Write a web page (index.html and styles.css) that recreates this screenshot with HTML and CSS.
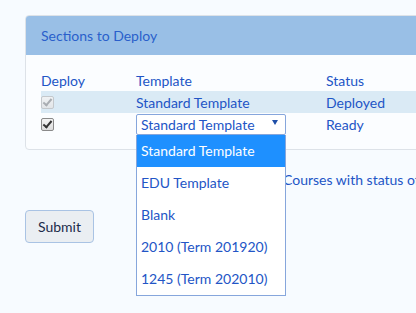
FILE: index.html
```html
<!DOCTYPE html>
<html lang="en">

<head>
    <meta charset="UTF-8">
    <title>Deploy Sections</title>
    <link rel="stylesheet" href="styles.css">
</head>

<body>
    <!-- Panel with sections -->
    <div class="panel">
        <div class="panel-heading">Sections to Deploy</div>
        <div class="panel-body">
            <table class="sections">
                <tr>
                    <th class="col-deploy">Deploy</th>
                    <th class="col-template">Template</th>
                    <th>Status</th>
                </tr>
                <tr class="deployed">
                    <td><input type="checkbox" checked disabled></td>
                    <td>Standard Template</td>
                    <td>Deployed</td>
                </tr>
                <tr>
                    <td><input type="checkbox" checked></td>
                    <td>
                        <div class="template-select">
                            <div class="select-box">
                                <span>Standard Template</span>
                                <span class="arrow"></span>
                            </div>
                            <ul class="options">
                                <li class="selected">Standard Template</li>
                                <li>EDU Template</li>
                                <li>Blank</li>
                                <li>2010 (Term 201920)</li>
                                <li>1245 (Term 202010)</li>
                            </ul>
                        </div>
                    </td>
                    <td>Ready</td>
                </tr>
            </table>
        </div>
    </div>

    <p class="note">Courses with status of Ready will be deployed.</p>

    <button class="submit">Submit</button>
</body>

</html>
```

FILE: styles.css
```css
/* General */
html {
    height: 100%;
    overflow: hidden;
}

body {
    font-family: 'Lato', sans-serif;
    font-size: 14px;
    box-sizing: border-box;
    height: 100%;
    margin: 0;
    padding: 15px 0 0 25px;
    background-color: #f7fbff;
    color: #2255c6;
}

/* Panel */
.panel {
    width: 480px;
    border: 1px solid #dde2e8;
    border-radius: 4px;
    background-color: #fbfdff;
}

.panel-heading {
    background-color: #99bfe6;
    color: #2a5fcb;
    height: 39px;
    line-height: 39px;
    padding: 0 15px;
    border-radius: 3px 3px 0 0;
}

.panel-body {
    padding: 15px 15px 14px;
}

/* Table */
.sections {
    width: 100%;
    border-collapse: collapse;
}

.sections th,
.sections td {
    padding: 0;
    height: 22px;
    text-align: left;
    font-weight: normal;
    vertical-align: middle;
}

.sections th {
    height: 21px;
}

.col-deploy {
    width: 95px;
}

.col-template {
    width: 190px;
}

.sections tr.deployed {
    background-color: #daeaf5;
}

/* Checkboxes */
.sections input {
    appearance: none;
    display: block;
    position: relative;
    box-sizing: border-box;
    width: 13px;
    height: 13px;
    margin: 0;
    border: 1px solid #8a8a8a;
    border-radius: 2px;
    background: linear-gradient(#f4f4f4, #dcdcdc);
}

.sections input:checked::after {
    content: "";
    position: absolute;
    left: 3px;
    top: 0;
    width: 3px;
    height: 7px;
    border: solid #333;
    border-width: 0 2px 2px 0;
    transform: rotate(40deg);
}

.sections input:disabled {
    border-color: #c4c8cc;
    background: linear-gradient(#f0f2f4, #e2e5e8);
}

.sections input:disabled::after {
    border-color: #a9adb2;
}

/* Template select */
.template-select {
    position: relative;
    width: 150px;
}

.select-box {
    display: flex;
    justify-content: space-between;
    align-items: center;
    box-sizing: border-box;
    height: 21px;
    padding: 0 7px 0 4px;
    border: 1px solid #86a6dc;
    border-radius: 2px;
    background-color: #fff;
}

.arrow {
    width: 0;
    height: 0;
    border-left: 3px solid transparent;
    border-right: 3px solid transparent;
    border-top: 5px solid #1f4fa8;
    margin-bottom: 3px;
}

.options {
    position: absolute;
    top: 21px;
    left: 0;
    z-index: 10;
    box-sizing: border-box;
    width: 150px;
    margin: 0;
    padding: 0;
    list-style: none;
    border: 1px solid #86a6dc;
    border-top: none;
    background-color: #fff;
}

.options li {
    height: 32px;
    line-height: 32px;
    padding-left: 4px;
}

.options li.selected {
    background-color: #1e90ff;
    color: #fff;
}

/* Note */
.note {
    margin: 20px 0 0 0;
    padding-left: 258px;
    white-space: nowrap;
    line-height: 20px;
}

/* Submit */
.submit {
    margin-top: 20px;
    width: 69px;
    height: 33px;
    font-family: 'Lato', sans-serif;
    font-size: 14px;
    color: #1c2b4a;
    background-color: #eaeef2;
    border: 1px solid #a9c3e4;
    border-radius: 4px;
}
```
